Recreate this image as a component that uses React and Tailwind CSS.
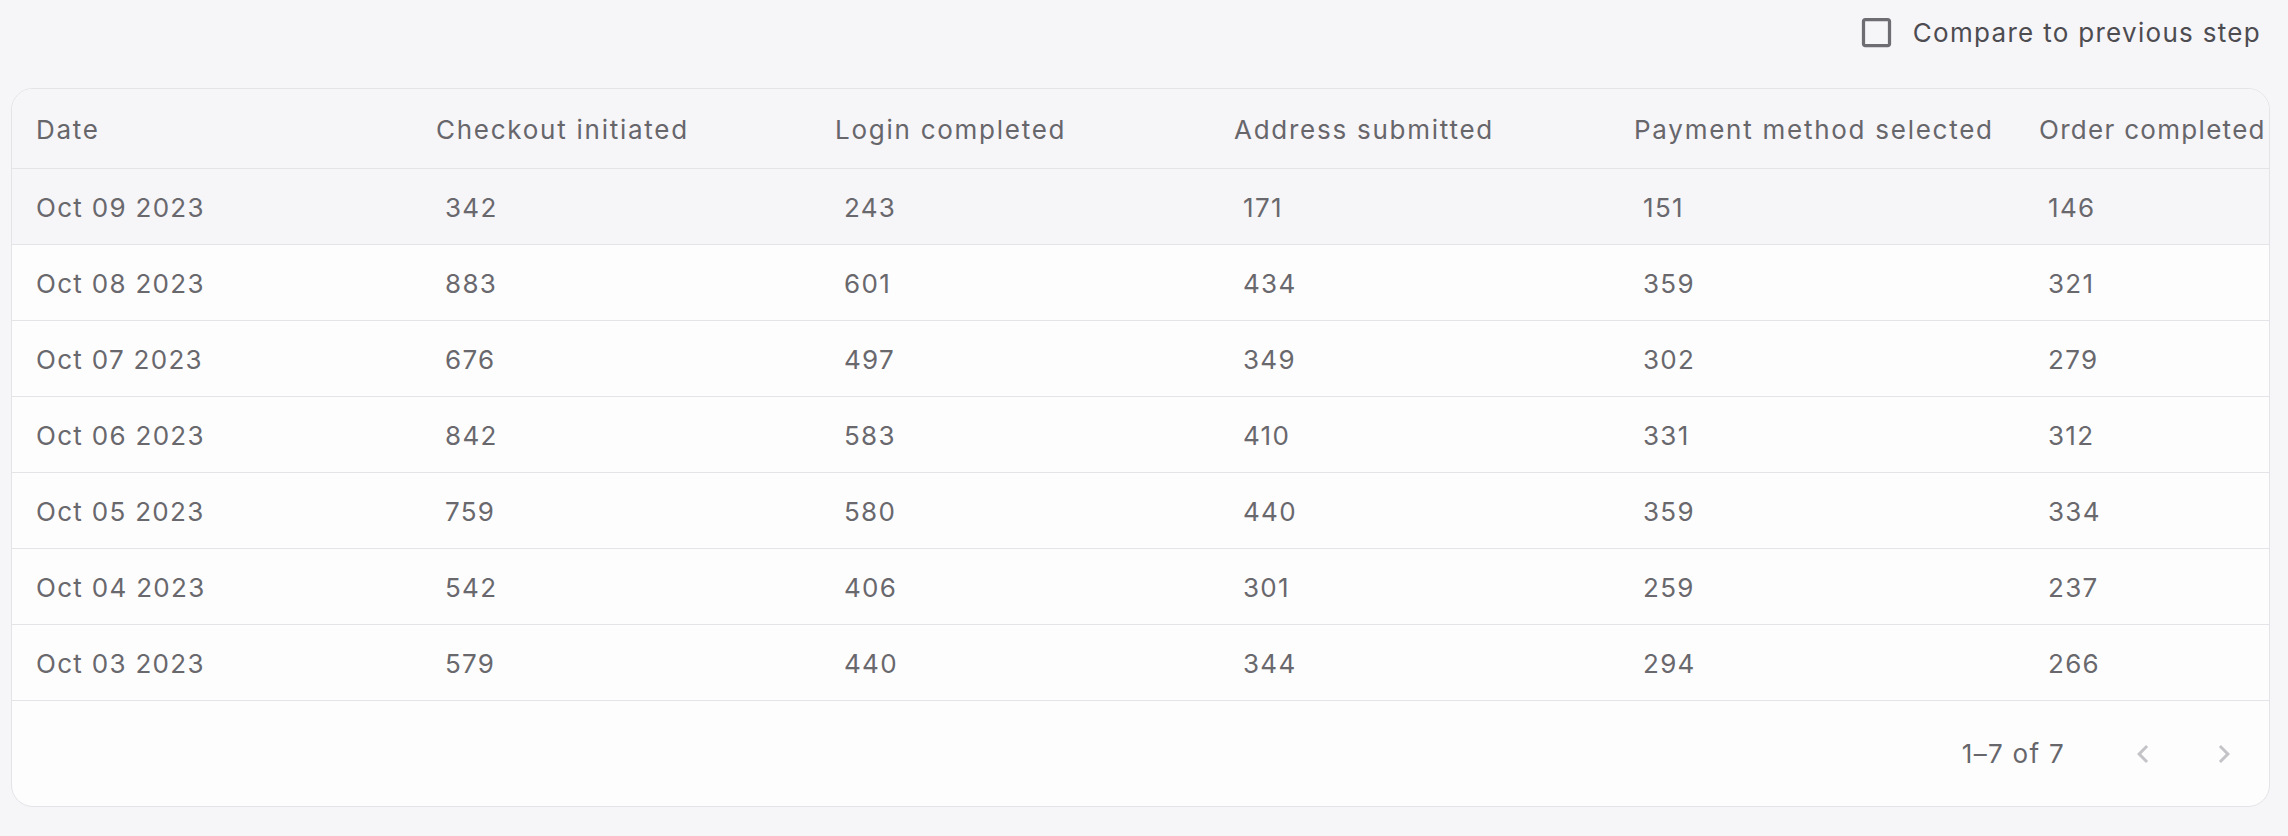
const columns = [
  "Date",
  "Checkout initiated",
  "Login completed",
  "Address submitted",
  "Payment method selected",
  "Order completed",
];

const rows = [
  ["Oct 09 2023", 342, 243, 171, 151, 146],
  ["Oct 08 2023", 883, 601, 434, 359, 321],
  ["Oct 07 2023", 676, 497, 349, 302, 279],
  ["Oct 06 2023", 842, 583, 410, 331, 312],
  ["Oct 05 2023", 759, 580, 440, 359, 334],
  ["Oct 04 2023", 542, 406, 301, 259, 237],
  ["Oct 03 2023", 579, 440, 344, 294, 266],
];

const headPad = [
  "pl-[24px] tracking-[0.067em]",
  "pl-[24px] tracking-[0.067em]",
  "pl-[23px] tracking-[0.067em]",
  "pl-[22px] tracking-[0.067em]",
  "pl-[22px] tracking-[0.067em]",
  "pl-[27px] tracking-[0.05em]",
];
const cellPad = ["pl-[24px]", "pl-[33px]", "pl-[32px]", "pl-[31px]", "pl-[31px]", "pl-[36px]"];

function Chevron({ dir }) {
  const d =
    dir === "left"
      ? "M15.41 7.41 14 6l-6 6 6 6 1.41-1.41L10.83 12z"
      : "M10 6 8.59 7.41 13.17 12l-4.58 4.59L10 18l6-6z";
  return (
    <svg viewBox="0 0 24 24" className="h-[36px] w-[36px] fill-[#c4c3c7]">
      <path d={d} />
    </svg>
  );
}

export default function App() {
  return (
    <div className="min-h-[836px] w-[2288px] bg-[#f6f5f8] font-['Inter',sans-serif] text-[#69686d]">
      <div className="flex h-[64px] items-center justify-end pr-[27px]">
        <label className="flex items-center">
          <svg viewBox="0 0 24 24" className="h-[39px] w-[39px] fill-[#6e6d72]">
            <path d="M19 5v14H5V5zm0-2H5c-1.11 0-2 .9-2 2v14c0 1.1.89 2 2 2h14c1.1 0 2-.9 2-2V5c0-1.1-.9-2-2-2" />
          </svg>
          <span className="ml-[17px] text-[26px] tracking-[0.05em] text-[#4d4c51]">
            Compare to previous step
          </span>
        </label>
      </div>

      <div className="ml-[11px] mt-[24px] w-[2259px] overflow-hidden rounded-[22px] border border-[#e4e3e7] bg-[#fefdfe]">
        <div className="flex h-[80px] items-center border-b border-[#e4e3e7] bg-[#f6f5f8] pt-[1px]">
          {columns.map((c, j) => (
            <div
              key={c}
              className={`w-[400px] shrink-0 whitespace-nowrap text-[26px] text-[#67666b] ${headPad[j]}`}
            >
              {c}
            </div>
          ))}
        </div>

        {rows.map((r, i) => (
          <div
            key={r[0]}
            className={
              i === 0
                ? "flex h-[76px] items-center border-b border-[#e4e3e7] bg-[#f6f5f8] pt-[1px]"
                : "flex h-[76px] items-center border-b border-[#e4e3e7] pt-[1px]"
            }
          >
            {r.map((v, j) => (
              <div
                key={j}
                className={`w-[400px] shrink-0 text-[26px] tracking-[0.05em] ${cellPad[j]}`}
              >
                {v}
              </div>
            ))}
          </div>
        ))}

        <div className="flex h-[105px] items-center justify-end pr-[27px]">
          <span className="text-[26px] tracking-[0.05em] text-[#67666b]">1–7 of 7</span>
          <div className="ml-[60px]">
            <Chevron dir="left" />
          </div>
          <div className="ml-[45px]">
            <Chevron dir="right" />
          </div>
        </div>
      </div>
    </div>
  );
}
